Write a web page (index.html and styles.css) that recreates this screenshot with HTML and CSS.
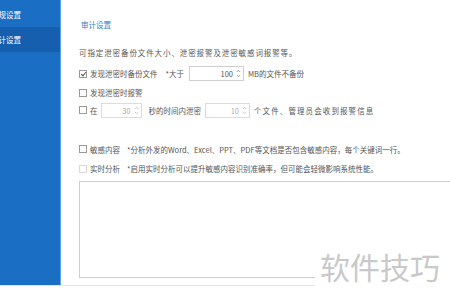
FILE: index.html
```html
<!DOCTYPE html>
<html lang="zh-CN">
<head>
  <meta charset="UTF-8">
  <title>审计设置</title>
  <link rel="stylesheet" href="styles.css">
</head>
<body>
  <div id="app">
    <nav id="sidebar">
      <div class="nav-item">常规设置</div>
      <div class="nav-item active">审计设置</div>
    </nav>

    <main id="content">
      <div class="title">审计设置</div>
      <div class="desc">可指定泄密备份文件大小、泄密报警及泄密敏感词报警等。</div>

      <div class="row row-backup">
        <span class="check checked"></span>
        <span class="label">发现泄密时备份文件</span>
        <span class="hint">*大于</span>
        <div class="spin spin-wide">
          <span class="val">100</span>
          <svg class="arrows" width="5" height="9" viewBox="0 0 5 9"><path d="M0.8 3 L2.5 1.3 L4.2 3 M0.8 6 L2.5 7.7 L4.2 6" fill="none" stroke="#8a8a8a" stroke-width="0.8"/></svg>
        </div>
        <span class="label">MB的文件不备份</span>
      </div>

      <div class="row row-alarm">
        <span class="check"></span>
        <span class="label">发现泄密时报警</span>
      </div>

      <div class="row row-time">
        <span class="check"></span>
        <span class="label">在</span>
        <div class="spin spin-off spin-sec">
          <span class="val">30</span>
          <svg class="arrows" width="5" height="9" viewBox="0 0 5 9"><path d="M0.8 3 L2.5 1.3 L4.2 3 M0.8 6 L2.5 7.7 L4.2 6" fill="none" stroke="#bbb" stroke-width="0.8"/></svg>
        </div>
        <span class="label">秒的时间内泄密</span>
        <div class="spin spin-off spin-count">
          <span class="val">10</span>
          <svg class="arrows" width="5" height="9" viewBox="0 0 5 9"><path d="M0.8 3 L2.5 1.3 L4.2 3 M0.8 6 L2.5 7.7 L4.2 6" fill="none" stroke="#bbb" stroke-width="0.8"/></svg>
        </div>
        <span class="label label-wide">个文件、管理员会收到报警信息</span>
      </div>

      <div class="row row-sensitive">
        <span class="check"></span>
        <span class="label label-fixed">敏感内容</span>
        <span class="hint">*分析外发的Word、Excel、PPT、PDF等文档是否包含敏感内容，每个关键词一行。</span>
      </div>

      <div class="row row-realtime">
        <span class="check disabled"></span>
        <span class="label label-fixed">实时分析</span>
        <span class="hint">*启用实时分析可以提升敏感内容识别准确率，但可能会轻微影响系统性能。</span>
      </div>

      <div class="keywords"></div>
    </main>
  </div>

  <div class="watermark">软件技巧</div>
</body>
</html>
```

FILE: styles.css
```css
html, body {
  margin: 0;
  padding: 0;
  background-color: #fff;
  font-family: "Noto Sans CJK SC", "Liberation Sans", sans-serif;
  color: #555;
  width: 450px;
  height: 301px;
  overflow: hidden;
}

#app {
  display: flex;
  margin-left: -20px;
  width: 520px;
  height: 285px;
  border-bottom: 1px solid #e4e4e4;
}

#sidebar {
  width: 81px;
  flex-shrink: 0;
  background-color: #1a6ec3;
  border-right: 1px solid #5fa3e3;
  padding-top: 2px;
  box-sizing: border-box;
}

.nav-item {
  height: 25px;
  line-height: 25px;
  padding-left: 11px;
  font-size: 7.5px;
  color: #fff;
}

.nav-item.active {
  background-color: #155fae;
}

#content {
  flex: 1;
  padding: 17px 0 0 18px;
  font-size: 7.5px;
}

.title {
  line-height: 15px;
  color: #3a7dc8;
  padding-left: 2px;
}

.desc {
  margin-top: 13px;
  line-height: 15px;
  letter-spacing: 0.9px;
}

.row {
  display: flex;
  align-items: center;
  height: 15px;
  white-space: nowrap;
}

.row-backup { margin-top: 6px; }
.row-alarm { margin-top: 4px; }
.row-time { margin-top: 2.5px; }
.row-sensitive { margin-top: 24px; }
.row-realtime { margin-top: 4.5px; }

.check {
  width: 8px;
  height: 8px;
  border: 1px solid #9a9a9a;
  box-sizing: border-box;
  margin-right: 3px;
  position: relative;
  flex-shrink: 0;
}

.check.disabled {
  border-color: #d8d8d8;
}

/* 对勾 */
.check.checked::after {
  content: "";
  position: absolute;
  left: 2px;
  top: 0.5px;
  width: 2px;
  height: 4px;
  border-right: 1px solid #555;
  border-bottom: 1px solid #555;
  transform: rotate(40deg);
}

.label-fixed {
  width: 37px;
}

.label-wide {
  letter-spacing: 1.1px;
}

.hint {
  margin-left: 8px;
}

.row-sensitive .hint,
.row-realtime .hint {
  margin-left: 0;
}

.spin {
  display: flex;
  align-items: center;
  justify-content: flex-end;
  height: 15px;
  border: 1px solid #cfcfcf;
  box-sizing: border-box;
  padding-right: 2px;
  color: #555;
}

.spin .val {
  margin-right: 3px;
}

.spin-off {
  border-color: #dcdcdc;
  color: #aaa;
}

.spin-wide {
  width: 55px;
  margin: 0 4px 0 5px;
}

.spin-sec {
  width: 41px;
  margin: 0 7px 0 3px;
}

.spin-count {
  width: 45px;
  margin: 0 4px 0 4px;
}

.keywords {
  margin-top: 4.5px;
  width: 400px;
  height: 97px;
  border: 1px solid #cdcdcd;
  box-sizing: border-box;
}

.watermark {
  position: absolute;
  left: 315px;
  top: 244px;
  width: 140px;
  height: 45px;
  padding-left: 5px;
  background-color: #fff;
  color: #c9c9c9;
  font-size: 30px;
  line-height: 44px;
  box-sizing: border-box;
}
```
